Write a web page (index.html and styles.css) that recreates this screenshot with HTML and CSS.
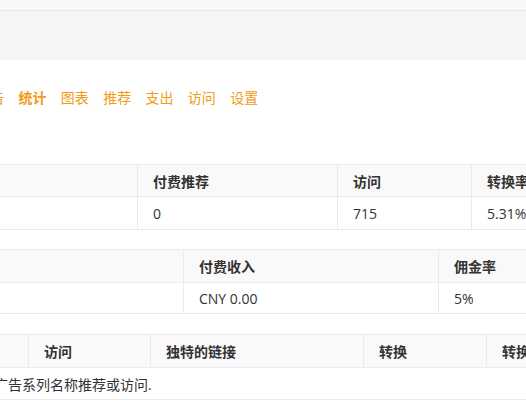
FILE: index.html
```html
<!DOCTYPE html>
<html lang="zh-CN">
<head>
<meta charset="utf-8">
<title>统计</title>
<link rel="stylesheet" href="styles.css">
</head>
<body>
<div class="topbar"></div>
<div class="band"></div>
<nav class="tabs">
  <a class="tab">广告</a>
  <a class="tab active">统计</a>
  <a class="tab">图表</a>
  <a class="tab">推荐</a>
  <a class="tab">支出</a>
  <a class="tab">访问</a>
  <a class="tab">设置</a>
</nav>
<main class="content">
  <table class="grid grid-a">
    <colgroup><col class="a1"><col class="a2"><col class="a3"><col></colgroup>
    <thead><tr><th>推荐</th><th>付费推荐</th><th>访问</th><th>转换率</th></tr></thead>
    <tbody><tr><td>38</td><td>0</td><td>715</td><td>5.31%</td></tr></tbody>
  </table>
  <table class="grid grid-b">
    <colgroup><col class="b1"><col class="b2"><col></colgroup>
    <thead><tr><th>收入</th><th>付费收入</th><th>佣金率</th></tr></thead>
    <tbody><tr><td>CNY 0.00</td><td>CNY 0.00</td><td>5%</td></tr></tbody>
  </table>
  <table class="grid grid-c">
    <colgroup><col class="c1"><col class="c2"><col class="c3"><col class="c4"><col></colgroup>
    <thead><tr><th>名称</th><th>访问</th><th>独特的链接</th><th>转换</th><th>转换率</th></tr></thead>
    <tbody><tr><td class="empty" colspan="5">广告系列名称推荐或访问.</td></tr></tbody>
  </table>
</main>
</body>
</html>
```
FILE: styles.css
```css
html, body {
  margin: 0;
  overflow: hidden;
}
body {
  font-family: "Open Sans", "Noto Sans CJK SC", sans-serif;
  font-size: 14px;
  color: #333;
  background: #fff;
}
.topbar {
  height: 10px;
  background: #f7f8fa;
  border-bottom: 1px solid #e4e6e8;
}
.band {
  height: 49px;
  background: #f4f5f5;
}
.tabs {
  display: flex;
  gap: 14.34px;
  margin: 28px 0 0 -23.8px;
  line-height: 20px;
}
.tab {
  color: #f29b16;
  white-space: nowrap;
}
.tab.active {
  font-weight: 700;
}
.content {
  margin: 56px 0 0 -100px;
  width: 900px;
}
.grid {
  width: 100%;
  table-layout: fixed;
  border-collapse: collapse;
  margin-bottom: 20px;
}
.grid th,
.grid td {
  border: 1px solid #ebebeb;
  padding: 0 15px;
  text-align: left;
  white-space: nowrap;
  overflow: hidden;
}
.grid th {
  background: #f9f9f9;
  font-weight: 700;
  height: 31px;
}
.grid td {
  height: 32px;
}
.grid-a {
  margin-bottom: 19px;
}
.grid-b th,
.grid-c th {
  height: 32px;
}
.grid-b td {
  height: 30px;
}
.grid-c td {
  height: 31px;
}
.a1 { width: 237px; }
.a2 { width: 200px; }
.a3 { width: 134px; }
.b1 { width: 283px; }
.b2 { width: 255px; }
.c1 { width: 128px; }
.c2 { width: 122px; }
.c3 { width: 213px; }
.c4 { width: 123px; }
.grid td.empty {
  padding-left: 93px;
}
```
